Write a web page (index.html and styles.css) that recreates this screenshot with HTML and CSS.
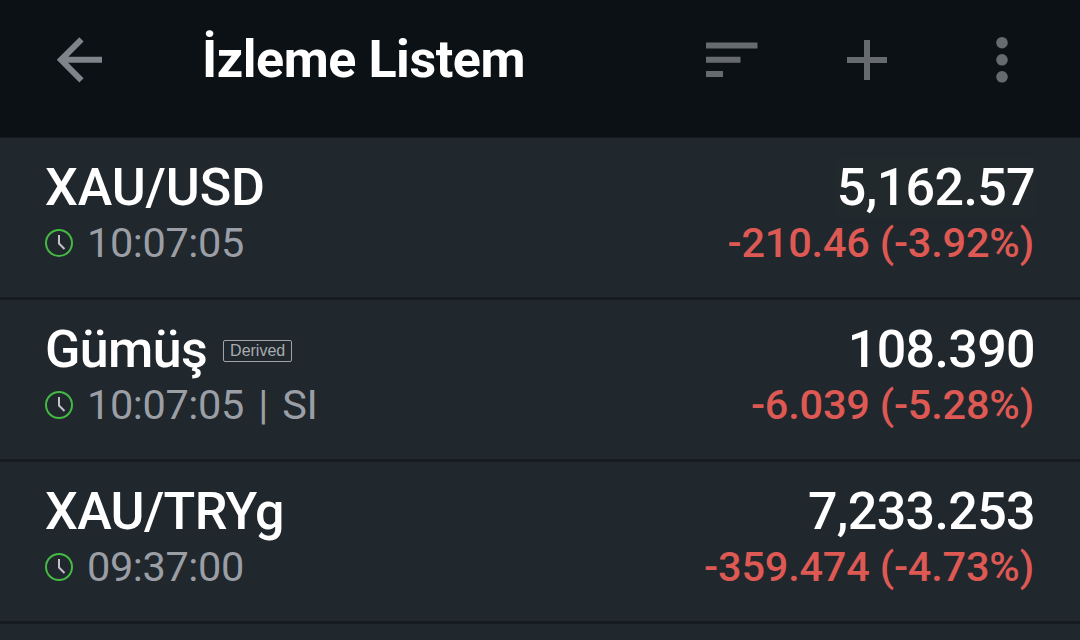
FILE: index.html
```
<!DOCTYPE html>
<html lang="tr">

<head>
  <meta charset="UTF-8">
  <meta name="viewport" content="width=device-width, initial-scale=1.0">
  <title>İzleme Listem</title>
  <link rel="stylesheet" href="styles.css">
</head>

<body>

  <header class="app-bar">
    <svg class="icon back" width="48" height="48" viewBox="0 0 48 48">
      <path d="M46 23.8H5M25.5 3.3L5 23.8l20.5 20.5" />
    </svg>
    <h1 class="title">İzleme Listem</h1>
    <svg class="icon sort" width="54" height="40" viewBox="0 0 54 40">
      <path d="M1 5.6h51.5M1 19.8h34.5M1 34h17" />
    </svg>
    <svg class="icon add" width="40" height="40" viewBox="0 0 40 40">
      <path d="M0 20h40M20 0v40" />
    </svg>
    <svg class="icon more" width="12" height="48" viewBox="0 0 12 48">
      <circle cx="6" cy="6.7" r="5.8" />
      <circle cx="6" cy="23.8" r="5.8" />
      <circle cx="6" cy="40.8" r="5.8" />
    </svg>
  </header>

  <main class="list">
    <section class="row">
      <div class="info">
        <div class="name"><span class="symbol pair">XAU/USD</span></div>
        <div class="meta">
          <svg class="clock" width="28" height="28" viewBox="0 0 28 28">
            <circle cx="14" cy="14" r="13" />
            <path d="M14 6v8.5l5.5 5.5" />
          </svg>
          <span>10:07:05</span>
        </div>
      </div>
      <div class="quote">
        <div class="price flash">5,162.57</div>
        <div class="change">-210.46 (-3.92%)</div>
      </div>
    </section>

    <section class="row">
      <div class="info">
        <div class="name"><span class="symbol">Gümüş</span><span class="badge">Derived</span></div>
        <div class="meta">
          <svg class="clock" width="28" height="28" viewBox="0 0 28 28">
            <circle cx="14" cy="14" r="13" />
            <path d="M14 6v8.5l5.5 5.5" />
          </svg>
          <span>10:07:05 | SI</span>
        </div>
      </div>
      <div class="quote">
        <div class="price">108.390</div>
        <div class="change">-6.039 (-5.28%)</div>
      </div>
    </section>

    <section class="row">
      <div class="info">
        <div class="name"><span class="symbol">XAU/TRYg</span></div>
        <div class="meta">
          <svg class="clock" width="28" height="28" viewBox="0 0 28 28">
            <circle cx="14" cy="14" r="13" />
            <path d="M14 6v8.5l5.5 5.5" />
          </svg>
          <span>09:37:00</span>
        </div>
      </div>
      <div class="quote">
        <div class="price">7,233.253</div>
        <div class="change">-359.474 (-4.73%)</div>
      </div>
    </section>
  </main>

</body>

</html>
```

FILE: styles.css
```
:root {
  --bar: #0c1115;
  --background: #20272d;
  --divider: #161b21;
  --icon: #676b6f;
  --muted: #9b9fa5;
  --down: #de5953;
  --clock: #44b944;
}

body {
  margin: 0;
  height: 640px;
  overflow: hidden;
  background-color: var(--background);
  color: #ffffff;
  font-family: Roboto, sans-serif;
}

.app-bar {
  height: 138px;
  padding: 0 72px 18px 56px;
  box-sizing: border-box;
  display: flex;
  align-items: center;
  background-color: var(--bar);
  border-bottom: 1px solid #14191e;
}

.icon {
  flex: none;
  fill: none;
  stroke: var(--icon);
  stroke-width: 6;
}

.back {
  stroke: #7f848a;
}

.title {
  flex: 1;
  margin: 0 0 0 98px;
  font-size: 52px;
  font-weight: 700;
  letter-spacing: -0.45px;
}

.add {
  margin: 0 109px 0 88px;
}

.more {
  fill: var(--icon);
  stroke: none;
}

.row {
  height: 162px;
  padding: 20px 45px 0;
  box-sizing: border-box;
  display: flex;
  justify-content: space-between;
  border-bottom: 3px solid var(--divider);
}

.name {
  display: flex;
  align-items: center;
  height: 60px;
}

.symbol,
.price {
  font-size: 52px;
  font-weight: 500;
  line-height: 60px;
  letter-spacing: -0.65px;
}

.symbol.pair {
  letter-spacing: -0.1px;
}

/* tint behind a price that has just ticked */
.flash {
  background-color: #21292c;
}

.badge {
  margin: 2px 0 0 16px;
  padding: 0 6px;
  border: 1.5px solid #a0a3a7;
  border-radius: 2px;
  color: #a9acb0;
  font-family: "Liberation Sans", sans-serif;
  font-size: 16px;
  line-height: 20px;
}

.meta {
  display: flex;
  align-items: center;
  gap: 14px;
  color: var(--muted);
  font-size: 41.5px;
  line-height: 50px;
  letter-spacing: -0.4px;
  word-spacing: 4.5px;
}

.clock {
  fill: none;
  stroke: var(--clock);
  stroke-width: 2;
}

.clock path {
  stroke: #c3c1ca;
}

.quote {
  display: flex;
  flex-direction: column;
  align-items: flex-end;
}

.change {
  padding-right: 1px;
  color: var(--down);
  font-size: 41.5px;
  font-weight: 500;
  line-height: 50px;
  letter-spacing: -0.2px;
}
```
